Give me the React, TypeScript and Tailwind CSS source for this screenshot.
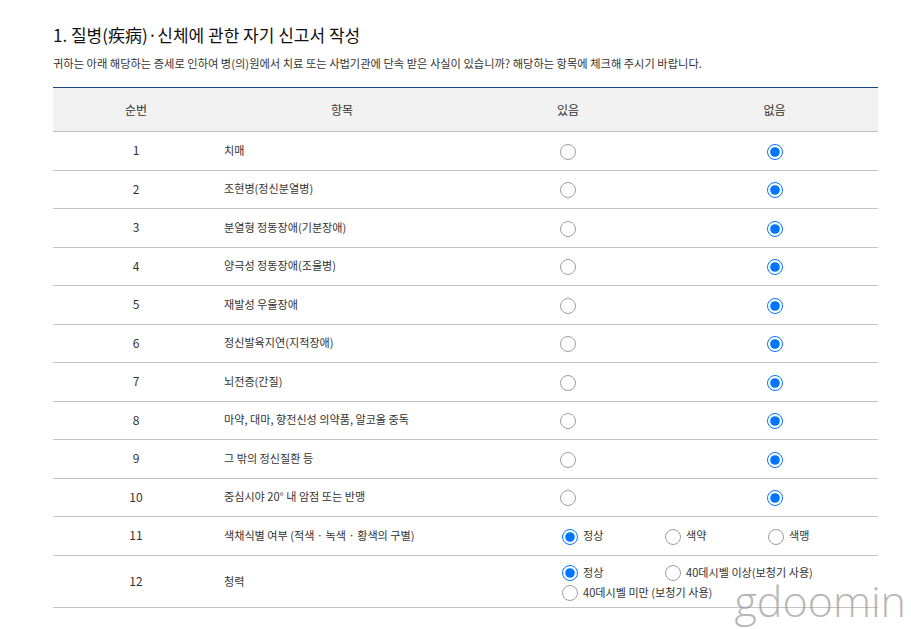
const font = { fontFamily: '"Noto Sans CJK KR", "Noto Sans", sans-serif' };

const rows = [
  "치매",
  "조현병(정신분열병)",
  "분열형 정동장애(기분장애)",
  "양극성 정동장애(조울병)",
  "재발성 우울장애",
  "정신발육지연(지적장애)",
  "뇌전증(간질)",
  "마약, 대마, 향전신성 의약품, 알코올 중독",
  "그 밖의 정신질환 등",
  "중심시야 20° 내 암점 또는 반맹",
];

function Radio({ name, checked }: { name: string; checked?: boolean }) {
  return (
    <input
      type="radio"
      name={name}
      defaultChecked={checked}
      className={`m-0 h-[16px] w-[16px] shrink-0 ${checked ? "" : "opacity-70"}`}
    />
  );
}

function Option({ name, label, checked, className }: { name: string; label: string; checked?: boolean; className?: string }) {
  return (
    <label className={`flex items-center gap-[5px] ${className ?? ""}`}>
      <Radio name={name} checked={checked} />
      <span className="relative top-[-1px]">{label}</span>
    </label>
  );
}

export default function App() {
  return (
    <div className="relative h-[629px] w-[911px] overflow-hidden bg-white text-[#333]" style={font}>
      <div className="pl-[53px] pr-[33px] pt-[21px]">
        <h2 className="text-[17px] font-normal leading-[28px] text-[#111]">1. 질병(疾病)·신체에 관한 자기 신고서 작성</h2>
        <p className="mt-[6px] text-[11.25px] leading-[16px] text-[#333]">
          귀하는 아래 해당하는 증세로 인하여 병(의)원에서 치료 또는 사법기관에 단속 받은 사실이 있습니까? 해당하는 항목에 체크해 주시기 바랍니다.
        </p>
        <table className="mt-[16px] w-[825px] table-fixed border-collapse border-t border-t-[#1c4587] text-[11.1px]">
          <colgroup>
            <col className="w-[166px]" />
            <col className="w-[246px]" />
            <col className="w-[206px]" />
            <col className="w-[207px]" />
          </colgroup>
          <thead>
            <tr className="h-[44px] border-b border-b-[#bdbdbd] bg-[#f1f1f1] text-[12px]">
              <th className="font-normal">순번</th>
              <th className="font-normal">항목</th>
              <th className="font-normal">있음</th>
              <th className="font-normal">없음</th>
            </tr>
          </thead>
          <tbody>
            {rows.map((label, i) => (
              <tr key={label} className="h-[38.5px] border-b border-b-[#c4c4c4]">
                <td className="pb-[1px] text-center text-[12px]">{i + 1}</td>
                <td className="pb-[1px] pl-[5px]">{label}</td>
                <td className="text-center">
                  <span className="flex justify-center pt-[2px]"><Radio name={`r${i}`} /></span>
                </td>
                <td className="text-center">
                  <span className="flex justify-center pt-[2px]"><Radio name={`r${i}`} checked /></span>
                </td>
              </tr>
            ))}
            <tr className="h-[38.5px] border-b border-b-[#c4c4c4]">
              <td className="pb-[1px] text-center text-[12px]">11</td>
              <td className="pb-[1px] pl-[5px]">색채식별 여부 (적색 · 녹색 · 황색의 구별)</td>
              <td colSpan={2} className="pl-[97px]">
                <div className="flex pt-[2px]">
                  <Option name="r11" label="정상" checked className="w-[103px]" />
                  <Option name="r11" label="색약" className="w-[103px]" />
                  <Option name="r11" label="색맹" />
                </div>
              </td>
            </tr>
            <tr className="h-[52px] border-b border-b-[#c4c4c4]">
              <td className="text-center text-[12px]">12</td>
              <td className="pl-[5px]">청력</td>
              <td colSpan={2} className="pl-[97px]">
                <div className="flex flex-col gap-[3px] pt-[4px]">
                  <div className="flex">
                    <Option name="r12" label="정상" checked className="w-[103px]" />
                    <Option name="r12" label="40데시벨 이상(보청기 사용)" />
                  </div>
                  <Option name="r12" label="40데시벨 미만 (보청기 사용)" />
                </div>
              </td>
            </tr>
          </tbody>
        </table>
      </div>
      <div
        className="absolute right-[5px] top-[572px] text-[43px] leading-[58px] text-[#9a9a9a] opacity-70"
        style={{ fontFamily: '"Open Sans", sans-serif', fontWeight: 300 }}
      >
        gdoomin
      </div>
    </div>
  );
}
